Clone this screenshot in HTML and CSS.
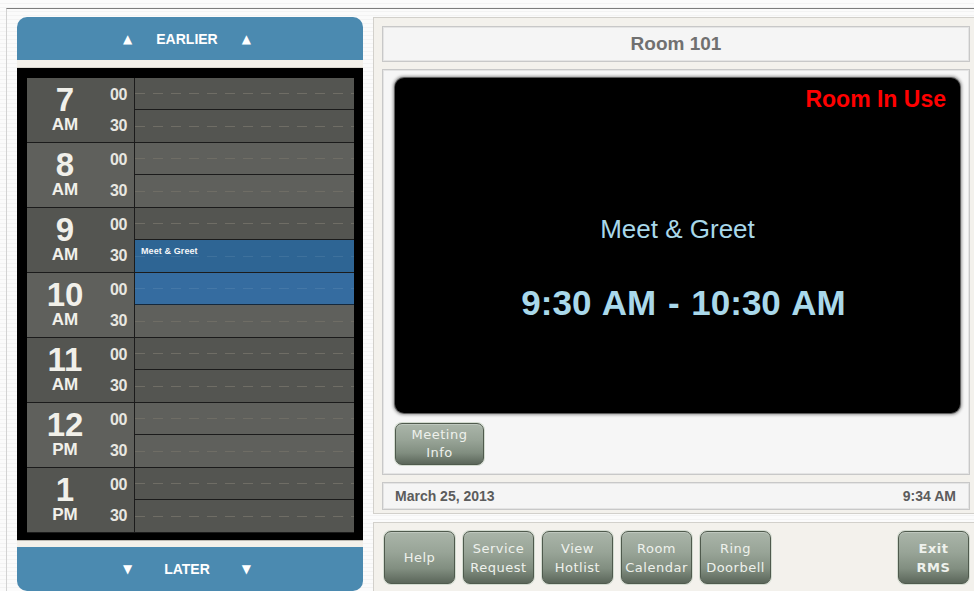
FILE: index.html
```html
<!DOCTYPE html>
<html lang="en">
<head>
<meta charset="utf-8">
<title>Room 101 – Scheduling Panel</title>
<link rel="stylesheet" href="styles.css">
</head>
<body>
<div class="frame">
  <section class="schedule">
    <div class="nav nav-up"><div class="nav-inner"><span class="arrow">▲</span><span class="nav-text">EARLIER</span><span class="arrow">▲</span></div></div>
    <div class="strip"></div>
    <div class="timeline">
      <div class="hour shade-a">
        <div class="hour-label"><span class="num">7</span><span class="ampm">AM</span></div>
        <div class="mins"><span>00</span><span>30</span></div>
        <div class="slots"><div class="slot"></div><div class="slot"></div></div>
      </div>
      <div class="hour shade-b">
        <div class="hour-label"><span class="num">8</span><span class="ampm">AM</span></div>
        <div class="mins"><span>00</span><span>30</span></div>
        <div class="slots"><div class="slot"></div><div class="slot"></div></div>
      </div>
      <div class="hour shade-a">
        <div class="hour-label"><span class="num">9</span><span class="ampm">AM</span></div>
        <div class="mins"><span>00</span><span>30</span></div>
        <div class="slots"><div class="slot"></div><div class="slot booked"><span class="event-name">Meet &amp; Greet</span></div></div>
      </div>
      <div class="hour shade-b">
        <div class="hour-label"><span class="num">10</span><span class="ampm">AM</span></div>
        <div class="mins"><span>00</span><span>30</span></div>
        <div class="slots"><div class="slot booked cont"></div><div class="slot"></div></div>
      </div>
      <div class="hour shade-a">
        <div class="hour-label"><span class="num">11</span><span class="ampm">AM</span></div>
        <div class="mins"><span>00</span><span>30</span></div>
        <div class="slots"><div class="slot"></div><div class="slot"></div></div>
      </div>
      <div class="hour shade-b">
        <div class="hour-label"><span class="num">12</span><span class="ampm">PM</span></div>
        <div class="mins"><span>00</span><span>30</span></div>
        <div class="slots"><div class="slot"></div><div class="slot"></div></div>
      </div>
      <div class="hour shade-a">
        <div class="hour-label"><span class="num">1</span><span class="ampm">PM</span></div>
        <div class="mins"><span>00</span><span>30</span></div>
        <div class="slots"><div class="slot"></div><div class="slot"></div></div>
      </div>
    </div>
    <div class="strip strip-low"></div>
    <div class="nav nav-down"><div class="nav-inner"><span class="arrow">▼</span><span class="nav-text">LATER</span><span class="arrow">▼</span></div></div>
  </section>

  <section class="room">
    <div class="room-panel">
      <div class="room-name">Room 101</div>
      <div class="room-body">
        <div class="screen">
          <div class="status">Room In Use</div>
          <div class="meeting-title">Meet &amp; Greet</div>
          <div class="meeting-time">9:30 AM - 10:30 AM</div>
        </div>
        <button class="btn btn-info">Meeting<br>Info</button>
      </div>
      <div class="datebar"><span>March 25, 2013</span><span>9:34 AM</span></div>
    </div>
    <div class="toolbar">
      <button class="btn btn-tool">Help</button>
      <button class="btn btn-tool">Service<br>Request</button>
      <button class="btn btn-tool">View<br>Hotlist</button>
      <button class="btn btn-tool">Room<br>Calendar</button>
      <button class="btn btn-tool">Ring<br>Doorbell</button>
      <button class="btn btn-tool btn-exit">Exit<br>RMS</button>
    </div>
  </section>
</div>
</body>
</html>
```

FILE: styles.css
```css
* {
  box-sizing: border-box;
}

html,
body {
  margin: 0;
  height: 100%;
  overflow: hidden;
}

body {
  background: repeating-linear-gradient(#fbfbfb 0 3px, #f3f3f3 3px 4px);
  font-family: "Liberation Sans", Arial, sans-serif;
}

/* outer frame of the panel */
.frame {
  margin: 8px 0 0 6px;
  border-top: 1px solid #7d7d7d;
  border-left: 1px solid #d2d2d2;
  padding: 8px 0 0 10px;
  display: flex;
  gap: 10px;
}

/* ---------- schedule column ---------- */
.schedule {
  width: 346px;
  flex: none;
  display: flex;
  flex-direction: column;
}

.nav {
  background: #4b8ab0;
  color: #fff;
  display: flex;
  justify-content: center;
  align-items: center;
  font-weight: bold;
  font-size: 14px;
  padding-right: 6px;
}

.nav-inner {
  width: 128px;
  display: flex;
  justify-content: space-between;
  align-items: center;
}

.nav-up {
  height: 43px;
  border-radius: 10px 10px 0 0;
}

.nav-down {
  height: 44px;
  border-radius: 0 0 10px 10px;
}

.arrow {
  font-family: "DejaVu Sans", sans-serif;
  font-size: 12px;
}

.strip {
  height: 8px;
  background: #f3f0ea;
  border-bottom: 1px solid #d9d6cf;
}

.strip-low {
  height: 7px;
  border-bottom: none;
  border-top: 1px solid #bdbab3;
}

.timeline {
  background: #000;
  padding: 10px 9px 7px 10px;
}

.hour {
  display: grid;
  grid-template-columns: 76px 31px 220px;
  height: 65px;
  border-bottom: 1px solid #1b1b1b;
  color: #f1f0ea;
}

.shade-a {
  background: #545551;
}

.shade-b {
  background: #5f605c;
}

.hour-label {
  display: flex;
  flex-direction: column;
  align-items: center;
  padding-top: 6px;
  font-weight: bold;
}

.num {
  font-size: 33px;
  line-height: 32px;
}

.ampm {
  font-size: 17px;
  line-height: 17px;
}

.mins {
  display: flex;
  flex-direction: column;
  align-items: center;
  font-weight: bold;
  font-size: 16px;
  letter-spacing: -0.5px;
  color: #e8e7e1;
}

.mins span {
  line-height: 16px;
  height: 16px;
}

.mins span:first-child {
  margin-top: 9px;
}

.mins span:last-child {
  margin-top: 15px;
}

.slots {
  border-left: 1px solid #1b1b1b;
  display: flex;
  flex-direction: column;
}

.slot {
  height: 32px;
  background: repeating-linear-gradient(to right, #6f6d65 0 10px, transparent 10px 18px) 0 50% / 100% 1px no-repeat;
}

.slot:first-child {
  border-bottom: 1px solid #1b1b1b;
}

.slot.booked {
  background:
    repeating-linear-gradient(to right, rgba(255, 255, 255, 0.08) 0 10px, transparent 10px 18px) 0 50% / 100% 1px no-repeat,
    #2e6594;
  padding: 6px 0 0 6px;
}

.slot.booked.cont {
  background:
    repeating-linear-gradient(to right, rgba(255, 255, 255, 0.08) 0 10px, transparent 10px 18px) 0 50% / 100% 1px no-repeat,
    #356ca0;
  border-bottom-color: #14283c;
}

.event-name {
  display: block;
  font-size: 9px;
  line-height: 10px;
  font-weight: bold;
  color: #f4f6f8;
  letter-spacing: 0.1px;
}

/* ---------- room column ---------- */
.room {
  width: 606px;
  flex: none;
  display: flex;
  flex-direction: column;
  gap: 8px;
}

.room-panel {
  height: 497px;
  background: #f3f1ec;
  border: 1px solid #d2d0cb;
  padding: 8px 8px 3px;
  display: flex;
  flex-direction: column;
  gap: 7px;
}

.room-name {
  height: 36px;
  background: #f5f5f5;
  border: 1px solid #c8c8c8;
  box-shadow: inset 0 0 0 1px #e4e4e4;
  display: flex;
  align-items: center;
  justify-content: center;
  font-size: 19px;
  font-weight: bold;
  color: #707070;
}

.room-body {
  height: 406px;
  background: #f6f6f6;
  border: 1px solid #c8c8c8;
  box-shadow: inset 0 0 0 1px #e4e4e4;
  padding: 8px 9px 0 12px;
}

.screen {
  height: 335px;
  background: #000;
  border-radius: 9px;
  box-shadow: 0 0 0 1px #5e5e5e, 0 0 3px 2px #9c9c9c;
  display: flex;
  flex-direction: column;
  align-items: center;
  padding: 8px 14px 0;
}

.status {
  align-self: flex-end;
  color: #ff0000;
  font-weight: bold;
  font-size: 23px;
  line-height: 26px;
}

.meeting-title {
  margin-top: 102px;
  font-size: 26px;
  line-height: 30px;
  color: #a9d8ea;
}

.meeting-time {
  margin-top: 39px;
  padding-left: 12px;
  font-size: 35px;
  line-height: 40px;
  font-weight: bold;
  word-spacing: 2px;
  color: #a9d8ea;
}

.datebar {
  height: 28px;
  background: #f5f5f5;
  border: 1px solid #c8c8c8;
  box-shadow: inset 0 0 0 1px #e4e4e4;
  display: flex;
  align-items: center;
  justify-content: space-between;
  padding: 0 13px 0 12px;
  font-size: 14px;
  font-weight: bold;
  color: #5c5c5c;
}

/* ---------- buttons ---------- */
.btn {
  margin: 0;
  padding: 0;
  border: 1px solid #4f5a4d;
  border-radius: 7px;
  background: linear-gradient(#aab5a9 0%, #98a497 40%, #818e80 72%, #5b665a 100%);
  box-shadow: 0 0 0 1px #d3dbd0, inset 0 1px 0 rgba(255, 255, 255, 0.25);
  color: #eef1ec;
  font-family: "DejaVu Sans", sans-serif;
  font-size: 13px;
  letter-spacing: 0.5px;
  line-height: 19px;
  text-align: center;
}

.btn-info {
  display: block;
  margin-top: 10px;
  width: 89px;
  height: 42px;
  line-height: 18px;
}

.toolbar {
  height: 69px;
  background: #f3f1ec;
  border: 1px solid #d2d0cb;
  border-bottom: none;
  padding: 8px 9px 0 10px;
  display: flex;
  align-items: flex-start;
  gap: 8px;
}

.btn-tool {
  width: 71px;
  height: 53px;
  flex: none;
}

.btn-exit {
  margin-left: auto;
  font-weight: bold;
}
```
